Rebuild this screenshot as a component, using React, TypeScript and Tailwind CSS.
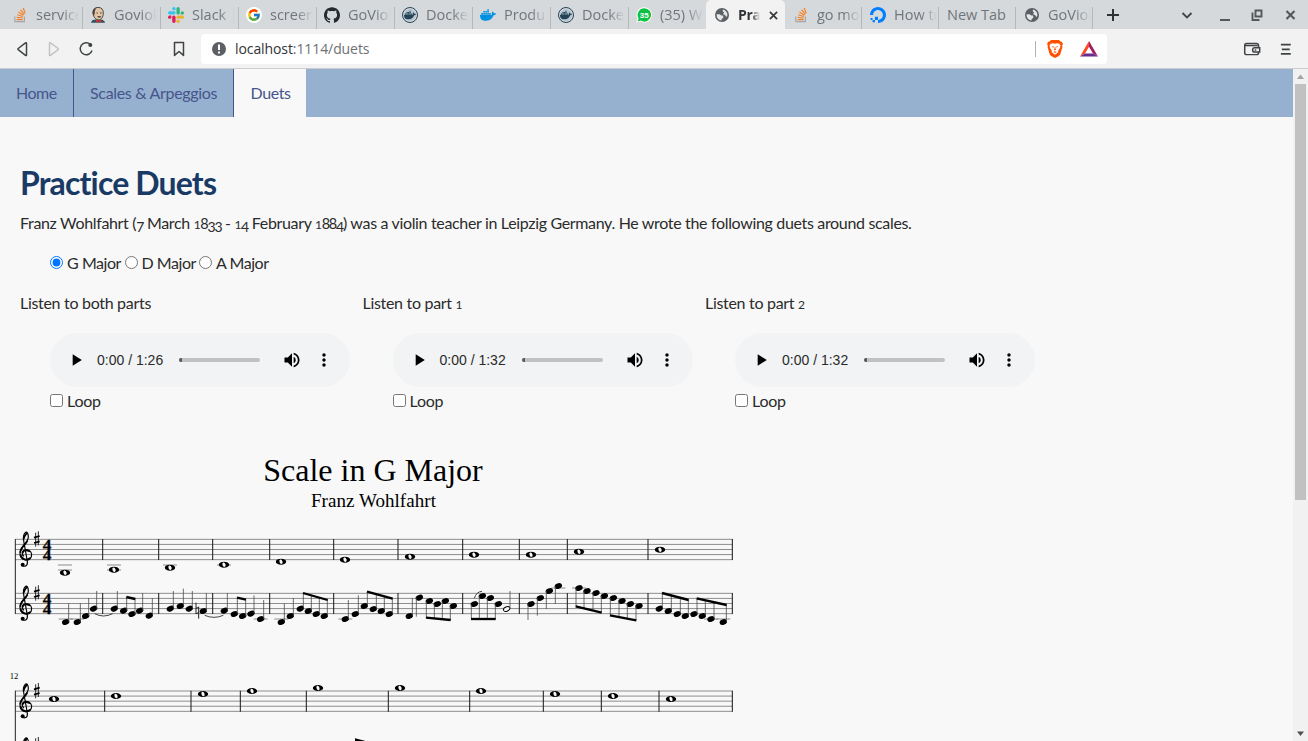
import type { ReactNode } from "react";
import { SiGithub, SiDocker, SiDigitalocean } from "react-icons/si";
import { FcGoogle } from "react-icons/fc";
import { MdMoreVert, MdPlayArrow, MdVolumeUp } from "react-icons/md";

/* ---------- Browser chrome icons ---------- */

function StackIcon() {
  return (
    <svg viewBox="0 0 16 16" className="size-4" fill="none">
      <path d="M2.8 9.5v5.2h9.6V9.5" stroke="#a5a7aa" strokeWidth="1.2" />
      <path d="M4.6 12.6h6M4.7 10.3l6 .7M5.2 7.7l5.7 1.8M6.4 5l5 3.2M8.5 2.6l3.8 4.7M11.2 1l2 5.4" stroke="#f48024" strokeWidth="1.2" />
    </svg>
  );
}

function JenkinsIcon() {
  return (
    <svg viewBox="0 0 16 16" className="size-4">
      <path d="M1 15.8c.5-2.4 2-3 4.5-3.3h5c2.500.3 4 1 4.500 3.300z" fill="#2f5361" />
      <path d="M3 5C3 2 5.200.4 8 .4c3.500 0 5.300 2 5.300 5.500 0 4-1.800 7-4.500 7C5.500 12.900 3 9.500 3 5z" fill="#e3c5a8" stroke="#3a3732" strokeWidth=".9" />
      <path d="M2.600 6.500c0-3.600 1.500-5.700 4-5.600C5.500 2 4.700 3.500 4.800 6L4 9z" fill="#4a4540" />
      <path d="M6.500 6h1.400M10 6h1.600M7.500 9.600c1.200.7 2.400.7 3.500 0" stroke="#4a3f35" strokeWidth="1" />
      <path d="m6 12.600 2.500 1.200 2.700-1.300v3.300L8.500 14.500 6 15.800z" fill="#d33833" />
    </svg>
  );
}

function SlackIcon() {
  return (
    <svg viewBox="0 0 24 24" className="size-4">
      <g fill="#36c5f0"><rect x="0" y="6.300" width="11.400" height="5" rx="2.500" /><path d="M6.300 2.500a2.500 2.500 0 1 1 5 0V5H8.800a2.500 2.500 0 0 1-2.500-2.500z" /></g>
      <g fill="#2eb67d"><rect x="12.700" y="0" width="5" height="11.400" rx="2.500" /><path d="M21.500 6.300a2.500 2.500 0 1 1 0 5H19V8.800a2.500 2.500 0 0 1 2.500-2.500z" /></g>
      <g fill="#ecb22e"><rect x="12.700" y="12.700" width="11.300" height="5" rx="2.500" /><path d="M17.700 21.500a2.500 2.500 0 1 1-5 0V19h2.500a2.500 2.500 0 0 1 2.500 2.500z" /></g>
      <g fill="#e01e5a"><rect x="6.300" y="12.700" width="5" height="11.300" rx="2.500" /><path d="M2.500 17.700a2.500 2.500 0 1 1 0-5H5v2.500a2.500 2.500 0 0 1-2.500 2.500z" /></g>
    </svg>
  );
}

function GoogleIcon() {
  return (
    <span className="flex size-4 items-center justify-center rounded-full bg-white">
      <FcGoogle className="size-[14px]" />
    </span>
  );
}

function DockerCircle() {
  return (
    <span className="flex size-4 items-center justify-center rounded-full border-[1.500px] border-[#254356] bg-[#d5d9dc] p-px">
      <span className="flex size-full items-center justify-center rounded-full bg-[#b5c6cf]">
        <SiDocker className="size-[12px] shrink-0 text-[#254356]" />
      </span>
    </span>
  );
}

function WhatsAppIcon() {
  return (
    <svg viewBox="0 0 16 16" className="size-4">
      <path d="M8.300.3a7.600 7.600 0 1 1-3.700 14.200L.4 15.600l1.100-4A7.600 7.600 0 0 1 8.300.3z" fill="#fff" />
      <path d="M8.300 1.200a6.700 6.700 0 1 1-3.500 12.400l-3.100.8.900-3A6.700 6.700 0 0 1 8.300 1.200z" fill="#0cc142" />
      <text x="8.300" y="10.500" textAnchor="middle" className="fill-white font-['Liberation_Sans'] text-[8px] font-bold">35</text>
    </svg>
  );
}

function GlobeIcon() {
  return (
    <svg viewBox="0 0 16 16" className="size-4">
      <circle cx="8" cy="8" r="7" fill="#5c5f63" />
      <path d="M2.600 7.300h2.700c.9 0 1.200.9 2 1.100l1.900.2v2.300L7.600 12v1.500C4.800 13.300 2.600 11 2.600 8zM9 2.500c2.600.5 4.400 2.700 4.400 5.500l-.4 1.700c-1.200 0-1.500-.6-1.800-1.700-1.300-.1-2-.5-2.200-1.400.8-.2 1.100-.6 1.100-1.300C9 5.100 8.300 4.500 9 2.500z" fill="#e4e6e8" />
    </svg>
  );
}

function BraveIcon() {
  return (
    <svg viewBox="0 0 16 18" className="ml-[11px] h-[18px] w-4">
      <path d="M4 0h8l1.500 1.600 1.400.2 1 2.200-.7 1.500.2 1.500-2 7c-.3 1-1.200 1.700-2 2.200L8 18l-3.400-1.800c-.8-.5-1.700-1.200-2-2.200L.6 7l.2-1.500L.1 4l1-2.200 1.400-.2z" fill="#ff5000" />
      <path d="M3.600 3.700 6 3.200l2 .6 2-.6 2.400.5 1.100 1.800-.5 2.300-1.900 3.200.2 1.200L8 14.700l-3.300-2.500.2-1.200L3 7.800l-.5-2.300z" fill="#fff" />
      <path d="m4.500 6 2.300.5-.4 1.200zM11.500 6l-2.300.5.400 1.200zM7.700 6.800h.6L8.600 9l.6.8-1.200.8-1.200-.8.600-.8zM6.300 12l1.700-.7 1.700.7-1.700 1z" fill="#ff5000" />
    </svg>
  );
}

type TabInfo = { title: string; icon?: ReactNode; width: string; active?: boolean; divider?: boolean };

const tabs: TabInfo[] = [
  { title: "service", icon: <StackIcon />, width: "w-[78px]" },
  { title: "Goviolin", icon: <JenkinsIcon />, width: "w-[78px]" },
  { title: "Slack | g", icon: <SlackIcon />, width: "w-[78px]" },
  { title: "screens", icon: <GoogleIcon />, width: "w-[78px]" },
  { title: "GoViolin", icon: <SiGithub className="size-4 text-[#24292f]" />, width: "w-[78px]" },
  { title: "Docker", icon: <DockerCircle />, width: "w-[78px]" },
  { title: "Produc", icon: <SiDocker className="size-4 text-[#0091e2]" />, width: "w-[78px]" },
  { title: "Docker", icon: <DockerCircle />, width: "w-[78px]" },
  { title: "(35) Wh", icon: <WhatsAppIcon />, width: "w-[78px]", divider: false },
  { title: "Prac", icon: <GlobeIcon />, width: "w-[79px]", active: true },
  { title: "go mod", icon: <StackIcon />, width: "w-[77px]" },
  { title: "How to", icon: <SiDigitalocean className="size-4 text-[#0080ff]" />, width: "w-[77px]" },
  { title: "New Tab", width: "w-[77px]" },
  { title: "GoViolin", icon: <GlobeIcon />, width: "w-[77px]" },
];

function Tab({ title, icon, width, active, divider = true }: TabInfo) {
  return (
    <div className={`${width} flex h-[29px] shrink-0 items-center pt-px pl-2 ${active ? "rounded-t-[5px] bg-[#f2f2f2]" : ""}`}>
      {icon && <span className="mr-2 flex size-4 shrink-0 items-center">{icon}</span>}
      <span
        className={`block overflow-hidden whitespace-nowrap leading-5 ${
          active
            ? "w-[22px] text-[14px] font-bold tracking-[-0.300px] text-[#303336]"
            : icon
              ? "w-[43px] text-[14.500px] text-[#70757a]"
              : "w-[62px] text-[14.500px] text-[#70757a]"
        } ${icon ? "[mask-image:linear-gradient(to_right,black_62%,transparent)]" : ""}`}
      >
        {title}
      </span>
      {active && (
        <svg viewBox="0 0 10 10" className="ml-[9px] size-[9px]" stroke="#37393c" strokeWidth="1.900">
          <path d="m1 1 8 8M9 1 1 9" />
        </svg>
      )}
      {!active && divider && (
        <span className={`mt-[6px] ml-auto h-[22px] w-px bg-[#b4b8bb] ${width === "w-[78px]" ? "-mr-px" : ""}`} />
      )}
    </div>
  );
}

function TabStrip() {
  return (
    <div className="flex h-[29px] items-center bg-[#d5d9dc] pl-1">
      {tabs.map((t, i) => (
        <Tab key={i} {...t} />
      ))}
      <svg viewBox="0 0 12 12" className="ml-[14px] size-3 shrink-0" stroke="#303336" strokeWidth="2">
        <path d="M6 0v12M0 6h12" />
      </svg>
      <svg viewBox="0 0 126 12" className="ml-[61px] h-3 w-[126px] shrink-0" fill="none" stroke="#54585b" strokeWidth="1.800">
        <path d="m2.500 4 4.500 4.500L11.500 4" stroke="#404346" />
        <path d="M40 11h10" strokeWidth="2" />
        <path d="M75.500 1.500h6v6h-6zM72.500 3.500v7.500h7" strokeWidth="1.900" />
        <path d="m106.500 2 8 8M114.500 2l-8 8" strokeWidth="2.100" />
      </svg>
    </div>
  );
}

function Toolbar() {
  return (
    <div className="flex h-10 items-center border-b border-[#cccdce] bg-[#f2f2f2]">
      <svg viewBox="0 0 190 40" className="h-10 w-[190px] shrink-0" fill="none" stroke="#404346" strokeWidth="1.500" strokeLinejoin="round">
        <path d="M26.500 14.300v11.600c0 .6-.5.800-1 .5l-7.300-5.700a.8.800 0 0 1 0-1.200l7.300-5.700c.5-.3 1-.1 1 .5z" />
        <path d="M49.500 14.300v11.600c0 .6.500.8 1 .5l7.600-5.700a.8.800 0 0 0 0-1.200l-7.600-5.700c-.5-.3-1-.1-1 .5z" stroke="#c2c3c4" />
        <path d="M90.300 15.300A6 6 0 1 0 92 21.500" />
        <circle cx="90.300" cy="16" r="2" fill="#404346" stroke="none" />
        <path d="M174.500 13.600h9v12.800l-4.500-3.900-4.500 3.900z" />
      </svg>
      <div className="ml-[11px] flex h-[30px] w-[906px] items-center rounded-[4px] bg-white">
        <svg viewBox="0 0 14 14" className="ml-[11px] size-[14px]">
          <circle cx="7" cy="7" r="7" fill="#5c5f63" />
          <path d="M6 2.500h2v5.500H6zM6 9.500h2v2H6z" fill="#fff" />
        </svg>
        <span className="ml-[9px] text-[14px] tracking-[-0.090px] text-[#6d7175]">
          <span className="text-[#303336]">localhost</span>:1114/duets
        </span>
        <span className="ml-auto h-4 w-px bg-[#b3b4b6]" />
        <BraveIcon />
        <svg viewBox="0 0 18 16" className="mr-[9px] ml-[17px] h-4 w-[18px]">
          <path d="M9 0 0 15.500l5-2.900L9 5.800z" fill="#ff4724" />
          <path d="m9 0 9 15.500-5-2.900L9 5.800z" fill="#9e1f63" />
          <path d="M0 15.500h18l-5-2.900H5z" fill="#662d91" />
        </svg>
      </div>
      <svg viewBox="0 0 70 40" className="ml-[132px] h-10 w-[69px]" fill="none" stroke="#404346" strokeWidth="1.500">
        <rect x="5.800" y="14.500" width="14" height="11.200" rx="2" />
        <path d="M6 16.500h13" />
        <path d="M21 18.700h-5a2.200 2.200 0 0 0 0 4.400h5z" fill="#f2f2f2" />
        <path d="M16 21h1.500M42.500 15.500h10M43.500 20.300h8M42.500 25h10" strokeWidth="1.700" />
      </svg>
    </div>
  );
}

/* ---------- Page ---------- */

// Old-style figures: short 0-2, descending 3, 4, 5, 7 and 9
function Figures({ text }: { text: string }) {
  return (
    <>
      {text.split("").map((c, i) =>
        /[012]/.test(c) ? (
          <span key={i} className="text-[12px]">{c}</span>
        ) : /[34579]/.test(c) ? (
          <span key={i} className="relative top-[3px] text-[14px] tracking-[-1.200px]">{c}</span>
        ) : /\d/.test(c) ? (
          <span key={i} className="text-[14.500px] tracking-[-1.200px]">{c}</span>
        ) : (
          c
        ),
      )}
    </>
  );
}

function PageNav() {
  return (
    <nav className="flex h-12 bg-[#96b0d0] text-[16px] leading-[48px] text-[#46568b]">
      <a className="w-[74px] border-r border-[#46568b] pl-4 tracking-[-0.500px] whitespace-nowrap">Home</a>
      <a className="w-[160px] border-r border-[#46568b] pl-4 tracking-[-0.320px] whitespace-nowrap">Scales &amp; Arpeggios</a>
      <a className="w-[72px] bg-[#f8f8f8] pl-[16.500px] tracking-[-0.400px] whitespace-nowrap">Duets</a>
    </nav>
  );
}

function Player({ label, duration }: { label: string; duration: string }) {
  return (
    <section className="w-[342.500px] shrink-0">
      <p className="h-5 leading-5 tracking-[-0.310px]"><Figures text={label} /></p>
      <div className="ml-[30px]">
        <div className="mt-5 flex h-[54px] w-[300px] items-center rounded-full bg-[#f1f3f4] text-black">
          <MdPlayArrow className="ml-[16px] size-5" />
          <span className="ml-[11px] w-[82px] font-['Liberation_Sans',sans-serif] text-[14px] text-[#2b2b2b]">0:00 / {duration}</span>
          <span className="flex h-1 w-[81px] overflow-hidden rounded-full bg-[#c0c1c2]">
            <span className="w-[3px] bg-[#5a5a5a]" />
          </span>
          <MdVolumeUp className="ml-[22px] size-5" />
          <MdMoreVert className="ml-[12px] size-5" />
        </div>
        <label className="mt-1 flex h-5 items-center leading-5 tracking-[-0.250px]">
          <input type="checkbox" className="mb-px mr-1 size-[13px]" />
          Loop
        </label>
      </div>
    </section>
  );
}

/* ---------- Sheet music (three drawing units per pixel) ---------- */

const range = (n: number) => Array.from({ length: n }, (_, i) => i);

function Clef({ y }: { y: number }) {
  return (
    <g transform={`translate(0 ${y})`} fill="none" stroke="#000" strokeLinecap="round">
      <path d="M71 50C63 44 67 31 79 31C91 31 98 43 94 52C88 67 60 65 60 42C60 23 85 12 85-8C85-17 81-23 77-21C70-16 69-4 72 10L82 66C84 81 72 84 66 77" strokeWidth="3.500" />
      <path d="M61 38C62 25 75 17 81 6M68 40C70 32 80 31 88 36M62 48C66 61 80 64 90 57M80-18C76-14 72-9 71-2" strokeWidth="5.500" />
      <circle cx="68" cy="76" r="6" fill="#000" stroke="none" />
      <path d="M107-20v42M115-24v42" strokeWidth="2.500" strokeLinecap="butt" />
      <path d="m102-5 17-5M102 11l17-5" strokeWidth="5" strokeLinecap="butt" />
    </g>
  );
}

function TimeSignature({ y }: { y: number }) {
  return (
    <g
      className="fill-black stroke-black stroke-[0.800px] font-['Liberation_Serif',serif] text-[45px] font-bold"
      textAnchor="middle"
      transform={`translate(141 ${y}) scale(1.150 1)`}
    >
      <text y="30.500">4</text>
      <text y="61">4</text>
    </g>
  );
}

function StaffLines({ y }: { y: number }) {
  return <>{range(5).map((i) => <path key={i} d={`M46 ${y + i * 15.25}H2198`} stroke="#8d8d8d" strokeWidth="3" />)}</>;
}

function Bars({ xs, y }: { xs: number[]; y: number }) {
  return <>{xs.map((x) => <path key={x} d={`M${x} ${y - 1}v63`} stroke="#222" strokeWidth="3.200" />)}</>;
}

function Whole({ x, y }: { x: number; y: number }) {
  return (
    <g transform={`translate(${x} ${y})`}>
      <ellipse rx="15.500" ry="9" />
      <ellipse rx="4.500" ry="7" transform="rotate(-20)" fill="#f8f8f8" />
    </g>
  );
}

function Head({ x, y }: { x: number; y: number }) {
  return <ellipse cx={x} cy={y} rx="11.500" ry="8.200" transform={`rotate(-25 ${x} ${y})`} />;
}

const barsTop = [308, 476, 638, 809, 1001, 1194, 1388, 1558, 1702, 1944, 2197];
const barsLow = [314, 573, 721, 919, 1165, 1409, 1630, 1804, 1977, 2197];

const wholes: [number, number][] = [
  [195, 158], [342, 149], [510, 143], [672, 134], [843, 125], [1035, 119], [1230, 110], [1422, 104], [1593, 104], [1737, 95], [1980, 89],
  [162, 537], [348, 528], [609, 522], [756, 513], [954, 504], [1200, 504], [1443, 513], [1665, 522], [1839, 528], [2013, 537],
];

// Single notes: x, y, end of stem
const notes: [number, number, number][] = [
  [197, 306, 250], [232, 306, 250], [257, 288, 234], [281, 266, 213],
  [343, 266, 213], [419, 272, 219], [448, 287, 234],
  [511, 266, 213], [541, 258, 206], [568, 266, 213], [610, 273, 219],
  [673, 272, 219], [753, 281, 226], [782, 297, 240],
  [844, 306, 250], [871, 288, 234], [1036, 297, 240], [1066, 282, 226],
  [1228, 288, 234], [1258, 233, 290],
  [1593, 252, 300], [1621, 234, 287], [1648, 213, 267], [1675, 198, 252],
];

// Beamed groups: heads, then the heights of the beam at its two ends
const groups: { heads: [number, number][]; beam: [number, number] }[] = [
  { heads: [[371, 272], [396, 282]], beam: [231, 237] },
  { heads: [[703, 282], [728, 288]], beam: [233, 239] },
  { heads: [[901, 266], [925, 273], [949, 282], [973, 288]], beam: [219, 240] },
  { heads: [[1093, 258], [1120, 267], [1144, 273], [1168, 282]], beam: [215, 236] },
  { heads: [[1288, 243], [1312, 252], [1336, 243], [1360, 258]], beam: [293, 300] },
  { heads: [[1423, 252], [1447, 228], [1471, 234], [1495, 252]], beam: [297, 297] },
  { heads: [[1737, 204], [1761, 213], [1788, 219], [1813, 228]], beam: [259, 278] },
  { heads: [[1840, 234], [1866, 243], [1891, 252], [1917, 258]], beam: [286, 301] },
  { heads: [[1978, 266], [2005, 273], [2032, 282], [2056, 288]], beam: [219, 240] },
  { heads: [[2082, 282], [2107, 288], [2133, 297], [2170, 306]], beam: [235, 255] },
];

function Group({ heads, beam }: { heads: [number, number][]; beam: [number, number] }) {
  const side = beam[0] < heads[0][1] ? 9 : -9;
  const start = heads[0][0] + side;
  const end = heads[heads.length - 1][0] + side;
  const at = (x: number) => beam[0] + ((beam[1] - beam[0]) * (x - start)) / (end - start);
  return (
    <g>
      {heads.map(([x, y]) => (
        <g key={x}>
          <Head x={x} y={y} />
          <path d={`M${x + side} ${y}V${at(x + side)}`} stroke="#444" strokeWidth="2.300" />
        </g>
      ))}
      <path d={`M${start - 1} ${beam[0]}L${end + 1} ${beam[1]}`} stroke="#000" strokeWidth="7" />
    </g>
  );
}

function Score() {
  const ledgers = [
    [195, 135], [195, 150], [342, 135], [342, 150], [510, 135], [672, 135],
    [197, 297], [232, 297], [782, 297], [844, 297], [1036, 297], [1675, 204], [1737, 204], [2133, 297], [2170, 297],
  ];
  return (
    <svg viewBox="0 0 2250 663" className="block h-[221px] w-[750px]">
      <StaffLines y={58} />
      <StaffLines y={220} />
      <StaffLines y={513} />
      <Bars xs={barsTop} y={58} />
      <Bars xs={barsTop} y={220} />
      <Bars xs={barsLow} y={513} />
      <path d="M46 57v225M46 512v151" stroke="#222" strokeWidth="3" />
      <Clef y={58} />
      <Clef y={220} />
      <Clef y={513} />
      <Clef y={675} />
      <TimeSignature y={58} />
      <TimeSignature y={220} />
      {ledgers.map(([x, y]) => (
        <path key={`${x}-${y}`} d={`M${x - 21} ${y}h42`} stroke="#777" strokeWidth="2.500" />
      ))}
      {wholes.map(([x, y]) => <Whole key={`${x}-${y}`} x={x} y={y} />)}
      {notes.map(([x, y, tip]) => {
        const side = tip < y ? 9 : -9;
        return (
          <g key={x}>
            <Head x={x} y={y} />
            <path d={`M${x + side} ${y}V${tip}`} stroke="#444" strokeWidth="2.300" />
          </g>
        );
      })}
      {groups.map((g, i) => <Group key={i} {...g} />)}
      <ellipse cx="1520" cy="267" rx="10" ry="6.500" transform="rotate(-25 1520 267)" fill="#f8f8f8" stroke="#000" strokeWidth="3" />
      <path d="M1530 265V213" stroke="#444" strokeWidth="2.300" />
      <g fill="none" stroke="#222" strokeWidth="2.500">
        <path d="M284 281q26 14 54 0M614 286q28 12 56 0M1423 235q6-20 23-21" />
        <path d="M588 248v34M596 260v36M588 265l8-3M588 281l8-3" strokeWidth="3" />
      </g>
      <path d="M1065 655l32 8h-32z" />
      <text x="29" y="477" className="fill-black font-['Liberation_Serif',serif] text-[26px]">12</text>
    </svg>
  );
}

function Scrollbar() {
  return (
    <div className="flex w-[15px] shrink-0 flex-col items-center bg-[#f1f1f1]">
      <svg viewBox="0 0 15 15" className="size-[15px]"><path d="m7.500 5.500 3.500 4.500H4z" fill="#a3a3a3" /></svg>
      <div className="h-[416px] w-[11px] bg-[#c1c1c1]" />
      <svg viewBox="0 0 15 15" className="mt-auto size-[15px]"><path d="M7.500 10 4 5.500h7z" fill="#505050" /></svg>
    </div>
  );
}

export default function App() {
  return (
    <div className="flex h-[741px] w-[1308px] flex-col overflow-hidden bg-[#f8f8f8] font-['Open_Sans',sans-serif]">
      <TabStrip />
      <Toolbar />
      <div className="flex min-h-0 flex-1 font-['Lato',sans-serif] text-[16px] text-[#2b2b2b]">
        <main className="min-w-0 flex-1 overflow-hidden">
          <PageNav />
          <div className="pt-[46px] pl-5">
            <h1 className="h-10 text-[32px] leading-10 font-bold tracking-[-0.850px] whitespace-nowrap text-[#1a3a66]">Practice Duets</h1>
            <p className="mt-[10px] h-5 leading-5 tracking-[-0.340px] whitespace-nowrap">
              <Figures text="Franz Wohlfahrt (7 March 1833 - 14 February 1884) was a violin teacher in Leipzig Germany. He wrote the following duets around scales." />
            </p>
            <div className="mt-5 ml-[30px] flex h-5 items-center leading-5 tracking-[-0.450px] whitespace-nowrap">
              {["G", "D", "A"].map((key) => (
                <label key={key} className="flex w-[74.500px] shrink-0 items-center">
                  <input type="radio" name="key" defaultChecked={key === "G"} className="mr-1 mb-px size-[13px]" />
                  {key} Major
                </label>
              ))}
            </div>
            <div className="mt-5 flex">
              <Player label="Listen to both parts" duration="1:26" />
              <Player label="Listen to part 1" duration="1:32" />
              <Player label="Listen to part 2" duration="1:32" />
            </div>
          </div>
          <div className="mt-[39px] h-[70px] w-[746px] pt-[2px] text-center font-['Liberation_Serif',serif] text-black">
            <h2 className="h-9 text-[32px] leading-9">Scale in G Major</h2>
            <p className="mt-px pl-px text-[19px] leading-6 tracking-[0.050px]">Franz Wohlfahrt</p>
          </div>
          <Score />
        </main>
        <Scrollbar />
      </div>
    </div>
  );
}
